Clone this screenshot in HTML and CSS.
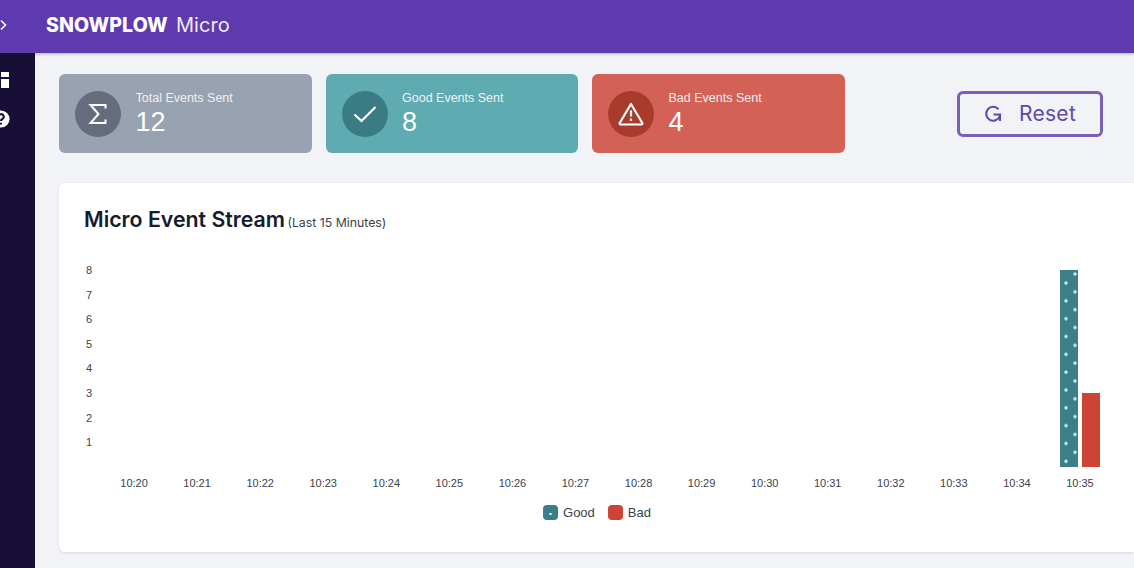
FILE: index.html
```html
<!DOCTYPE html>
<html lang="en">
<head>
    <meta charset="UTF-8">
    <meta name="viewport" content="width=device-width, initial-scale=1.0">
    <title>Snowplow Micro</title>
    <link rel="stylesheet" href="styles.css">
</head>
<body>
<header class="topbar">
    <svg class="topbar-toggle" viewBox="0 0 8 12" width="8" height="12"><path d="M1 1.500 5.500 6 1 10.500" fill="none" stroke="#fff" stroke-width="1.600"/></svg>
    <div class="logo"><span class="logo-brand">SNOWPLOW</span><span class="logo-product">Micro</span></div>
</header>
<div class="layout">
    <aside class="sidebar">
        <svg viewBox="0 0 10 16" width="10" height="16"><path d="M1 0h8v5H1zM1 7h8v9H1z" fill="#fff"/></svg>
        <svg viewBox="0 0 10 18" width="10" height="18">
            <circle cx="1" cy="9" r="8.600" fill="#fff"/>
            <path d="M-1.500 6.800a2.600 2.600 0 1 1 3.600 2.400c-.8.400-1.100.8-1.100 1.800" fill="none" stroke="#170f35" stroke-width="2.200"/>
            <circle cx="1" cy="13.600" r="1.100" fill="#170f35"/>
        </svg>
    </aside>
    <main class="main">
        <section class="summary">
            <div class="stat stat-total">
                <div class="stat-icon">
                    <svg viewBox="0 0 24 24" width="24" height="24"><path d="M19.500 6.500V3H4.500l8 9-8 9h15v-3.500" fill="none" stroke="#fff" stroke-width="2"/></svg>
                </div>
                <div>
                    <div class="stat-label">Total Events Sent</div>
                    <div class="stat-value">12</div>
                </div>
            </div>
            <div class="stat stat-good">
                <div class="stat-icon">
                    <svg viewBox="0 0 24 24" width="24" height="24"><path d="M1.500 12.500 8.500 19 22.500 5" fill="none" stroke="#fff" stroke-width="2.200"/></svg>
                </div>
                <div>
                    <div class="stat-label">Good Events Sent</div>
                    <div class="stat-value">8</div>
                </div>
            </div>
            <div class="stat stat-bad">
                <div class="stat-icon">
                    <svg viewBox="0 0 26 24" width="26" height="24">
                        <path d="M13 2 24.300 21a1 1 0 0 1-.9 1.500H2.600a1 1 0 0 1-.9-1.500z" fill="none" stroke="#fff" stroke-width="2.200" stroke-linejoin="round"/>
                        <path d="M13 8.500v6M13 16.500v2.500" stroke="#fff" stroke-width="2.200"/>
                    </svg>
                </div>
                <div>
                    <div class="stat-label">Bad Events Sent</div>
                    <div class="stat-value">4</div>
                </div>
            </div>
            <button class="reset-btn">
                <svg viewBox="0 0 20 20" width="20" height="20"><path d="M15.500 5.200A7 7 0 1 0 16.800 12M10.500 10.500h7.500M17 9.500V17" fill="none" stroke="#6446b0" stroke-width="2.100"/></svg>
                Reset
            </button>
        </section>
        <section class="chart-card">
            <h2 class="chart-title">Micro Event Stream <small>(Last 15 Minutes)</small></h2>
            <div class="chart">
                <div class="y-axis">
                    <span>8</span><span>7</span><span>6</span><span>5</span><span>4</span><span>3</span><span>2</span><span>1</span>
                </div>
                <div class="plot">
                    <div class="plot-col"><div class="bars"></div><span>10:20</span></div>
                    <div class="plot-col"><div class="bars"></div><span>10:21</span></div>
                    <div class="plot-col"><div class="bars"></div><span>10:22</span></div>
                    <div class="plot-col"><div class="bars"></div><span>10:23</span></div>
                    <div class="plot-col"><div class="bars"></div><span>10:24</span></div>
                    <div class="plot-col"><div class="bars"></div><span>10:25</span></div>
                    <div class="plot-col"><div class="bars"></div><span>10:26</span></div>
                    <div class="plot-col"><div class="bars"></div><span>10:27</span></div>
                    <div class="plot-col"><div class="bars"></div><span>10:28</span></div>
                    <div class="plot-col"><div class="bars"></div><span>10:29</span></div>
                    <div class="plot-col"><div class="bars"></div><span>10:30</span></div>
                    <div class="plot-col"><div class="bars"></div><span>10:31</span></div>
                    <div class="plot-col"><div class="bars"></div><span>10:32</span></div>
                    <div class="plot-col"><div class="bars"></div><span>10:33</span></div>
                    <div class="plot-col"><div class="bars"></div><span>10:34</span></div>
                    <div class="plot-col">
                        <div class="bars">
                            <div class="bar bar-good" style="height: 197px"></div>
                            <div class="bar bar-bad" style="height: 74px"></div>
                        </div>
                        <span>10:35</span>
                    </div>
                </div>
            </div>
            <div class="legend">
                <div class="legend-item"><i class="swatch swatch-good"></i>Good</div>
                <div class="legend-item"><i class="swatch swatch-bad"></i>Bad</div>
            </div>
        </section>
    </main>
</div>
</body>
</html>
```
FILE: styles.css
```css
* {
  box-sizing: border-box;
}

html, body {
  height: 100%;
}

body {
  margin: 0;
  display: flex;
  flex-direction: column;
  overflow: hidden;
  background-color: #f1f3f7;
  font-family: "Liberation Sans", Arial, sans-serif;
}

.topbar {
  position: relative;
  z-index: 1;
  height: 53px;
  flex: none;
  display: flex;
  align-items: center;
  padding-bottom: 4px;
  background-color: #5f39ae;
  box-shadow: 0 1px 3px rgba(40, 20, 90, 0.3);
}

.topbar-toggle {
  flex: none;
}

.logo {
  margin-left: 38px;
  color: #fff;
  font-family: Inter, sans-serif;
  font-size: 20px;
  white-space: nowrap;
}

.logo-brand {
  font-weight: 800;
  font-size: 19.500px;
  letter-spacing: 0.100px;
}

.logo-product {
  margin-left: 8px;
  font-weight: 400;
  letter-spacing: 0.100px;
  color: #efeaf8;
}

.layout {
  flex: 1;
  display: flex;
  min-height: 0;
}

.sidebar {
  width: 35px;
  flex: none;
  display: flex;
  flex-direction: column;
  gap: 22px;
  padding-top: 19px;
  background-color: #170f35;
}

.main {
  flex: 1;
  min-width: 0;
  padding: 21px 0 0 24px;
}

.summary {
  display: flex;
  align-items: center;
  gap: 14px;
}

.stat {
  width: 252.500px;
  height: 79px;
  flex: none;
  display: flex;
  align-items: center;
  gap: 15px;
  padding-left: 16px;
  border-radius: 6px;
  color: #fff;
}

.stat-total {
  background-color: #99a2b1;
}

.stat-good {
  background-color: #5eabb1;
}

.stat-bad {
  background-color: #d46155;
}

.stat-icon {
  width: 46px;
  height: 46px;
  flex: none;
  display: flex;
  align-items: center;
  justify-content: center;
  border-radius: 50%;
}

.stat-total .stat-icon {
  background-color: #646c7e;
}

.stat-good .stat-icon {
  background-color: #3b7c84;
}

.stat-bad .stat-icon {
  background-color: #a83b2c;
}

.stat-label {
  margin-top: 2px;
  margin-left: -0.500px;
  font-size: 12.500px;
  line-height: 15px;
  color: #eef1f4;
}

.stat-value {
  margin-left: -0.500px;
  font-size: 27px;
  line-height: 32px;
}

.reset-btn {
  width: 146px;
  height: 46px;
  flex: none;
  display: flex;
  align-items: center;
  justify-content: center;
  gap: 16px;
  margin-left: 98px;
  border: 3px solid #7a5fbd;
  border-radius: 6px;
  background: transparent;
  color: #6446b0;
  font-family: Inter, sans-serif;
  font-size: 21px;
  letter-spacing: 0.300px;
}

.chart-card {
  height: 369px;
  margin-top: 30px;
  padding: 23px 0 0 25px;
  border-radius: 6px 0 0 6px;
  background-color: #fff;
  box-shadow: 0 1px 3px rgba(30, 40, 70, 0.12);
}

.chart-title {
  margin: 0;
  color: #171c2c;
  font-family: Inter, sans-serif;
  font-size: 21.300px;
  line-height: 26px;
  font-weight: 600;
}

.chart-title small {
  margin-left: -3px;
  color: #3a3f4c;
  font-size: 12.300px;
  font-weight: 400;
}

.chart {
  display: flex;
  align-items: flex-start;
  margin-top: 34px;
}

.y-axis {
  width: 18.500px;
  flex: none;
  margin-top: -12px;
  color: #3a3f4c;
  font-size: 11px;
}

.y-axis span {
  display: block;
  height: 24.600px;
  line-height: 24.600px;
  padding-left: 2px;
}

.plot {
  display: grid;
  grid-template-columns: repeat(16, 63.070px);
}

.plot-col {
  display: flex;
  flex-direction: column;
  align-items: center;
  color: #3a3f4c;
  font-size: 11px;
  line-height: 14px;
}

.bars {
  height: 197px;
  display: flex;
  align-items: flex-end;
  gap: 4px;
  margin-bottom: 9px;
}

.bar {
  width: 18px;
}

.bar-good {
  background-color: #3c7f88;
  background-image:
    radial-gradient(circle at 15px 4px, #c6e8ea 1.300px, transparent 2.100px),
    radial-gradient(circle at 6px 13px, #c6e8ea 1.300px, transparent 2.100px);
  background-size: 18px 17.830px;
}

.bar-bad {
  background-color: #cb4436;
}

.legend {
  display: flex;
  justify-content: center;
  gap: 13px;
  margin: 15px 0 0 -24px;
  color: #3a3f4c;
  font-size: 13px;
}

.legend-item {
  display: flex;
  align-items: center;
  gap: 5px;
}

.swatch {
  width: 15px;
  height: 15px;
  border-radius: 4px;
}

.swatch-good {
  background-color: #3c7f88;
  background-image: radial-gradient(circle at 7.500px 9px, #c6e8ea 1px, transparent 1.500px);
}

.swatch-bad {
  background-color: #cb4436;
}
```
